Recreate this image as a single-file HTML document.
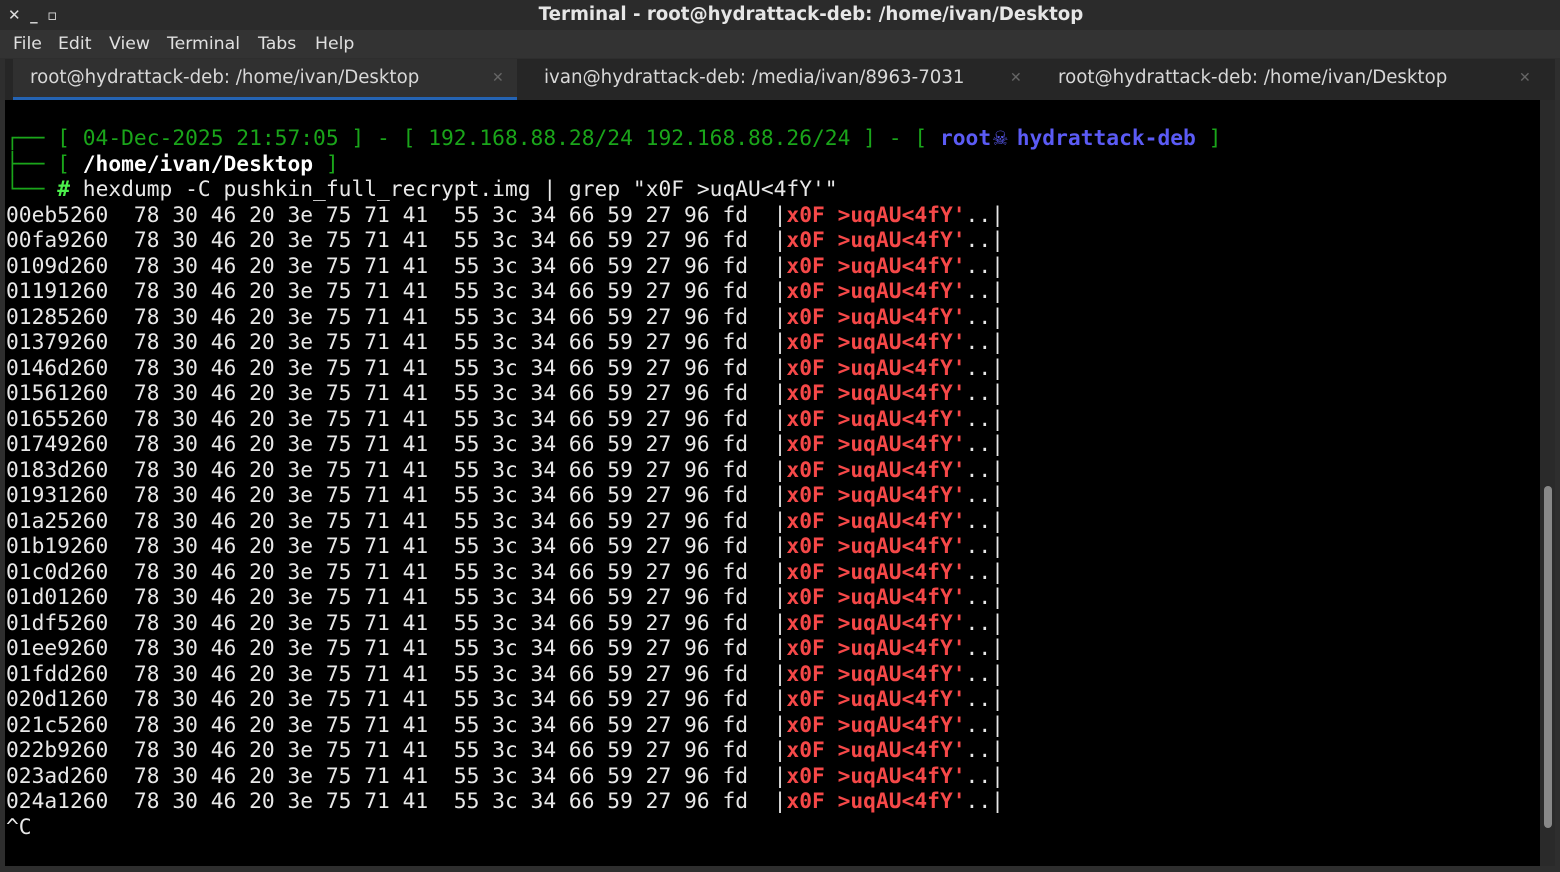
<!DOCTYPE html>
<html><head><meta charset="utf-8"><style>
*{margin:0;padding:0;box-sizing:border-box}
body{width:1560px;height:872px;background:#2e2e2e;overflow:hidden;position:relative;font-family:"DejaVu Sans","Liberation Sans",sans-serif}
.title{position:absolute;left:0;top:0;width:1622px;height:30px;background:#2b2b2b;color:#e6e6e6;font-weight:bold;font-size:18.2px;text-align:center;line-height:30px}
.wc{position:absolute;top:0;left:8px;color:#ddd;font-size:15px;line-height:30px}
.menu{position:absolute;top:30px;left:0;width:1560px;height:28px;background:#333;color:#e0e0e0;font-size:17.3px;line-height:28px}
.menu span{position:absolute}
.tabs{position:absolute;top:59px;left:5px;width:1550px;height:41px;background:#262626}
.tab{position:absolute;top:0;height:41px;color:#d8d8d8;font-size:18.2px;line-height:38px}
.tab .x{position:absolute;color:#666;font-size:14px}
.term{position:absolute;left:5px;top:100px;width:1535px;height:766px;background:#000;overflow:hidden}
.sb{position:absolute;left:1540px;top:100px;width:15px;height:766px;background:#2a2a2a}
.thumb{position:absolute;left:4px;top:386px;width:8px;height:342px;background:#888;border-radius:4px}
pre{position:absolute;left:1px;top:26px;font-family:"DejaVu Sans Mono","Liberation Mono",monospace;font-size:21.25px;line-height:25.5px;color:#e8e8e8}
.g{color:#1aa51a}.G{color:#4cf04c;font-weight:bold}.b{color:#5b5bf5;font-weight:bold}.w{color:#fff;font-weight:bold}.r{color:#f54848;font-weight:bold}
.sk{display:inline-block;width:12.8px;font-size:24px;line-height:10px;transform:translateX(2px)}
</style></head><body>
<div class="title">Terminal - root@hydrattack-deb: /home/ivan/Desktop</div>
<div class="wc">✕&nbsp;&nbsp;<b>_</b>&nbsp;&nbsp;▫</div>
<div class="menu"><span style="left:13px">File</span><span style="left:58px">Edit</span><span style="left:109px">View</span><span style="left:167px">Terminal</span><span style="left:258px">Tabs</span><span style="left:315px">Help</span></div>
<div class="tabs">
<div class="tab" style="left:8px;width:504px;background:#303030;border-bottom:3px solid #2463b3"><span style="position:absolute;left:17px">root@hydrattack-deb: /home/ivan/Desktop</span><span class="x" style="left:479px">✕</span></div>
<div class="tab" style="left:512px;width:514px"><span style="position:absolute;left:27px">ivan@hydrattack-deb: /media/ivan/8963-7031</span><span class="x" style="left:493px">✕</span></div>
<div class="tab" style="left:1026px;width:514px"><span style="position:absolute;left:27px">root@hydrattack-deb: /home/ivan/Desktop</span><span class="x" style="left:488px">✕</span></div>
</div>
<div class="term"><pre><span class="g">┌── [ 04-Dec-2025 21:57:05 ] - [ 192.168.88.28/24 192.168.88.26/24 ] - [ </span><span class="b">root<span class="sk">☠</span> hydrattack-deb</span><span class="g"> ]</span>
<span class="g">├── [ </span><span class="w">/home/ivan/Desktop</span><span class="g"> ]</span>
<span class="g">└── </span><span class="G">#</span> hexdump -C pushkin_full_recrypt.img | grep "x0F &gt;uqAU&lt;4fY'"
00eb5260  78 30 46 20 3e 75 71 41  55 3c 34 66 59 27 96 fd  |<span class="r">x0F &gt;uqAU&lt;4fY'</span>..|
00fa9260  78 30 46 20 3e 75 71 41  55 3c 34 66 59 27 96 fd  |<span class="r">x0F &gt;uqAU&lt;4fY'</span>..|
0109d260  78 30 46 20 3e 75 71 41  55 3c 34 66 59 27 96 fd  |<span class="r">x0F &gt;uqAU&lt;4fY'</span>..|
01191260  78 30 46 20 3e 75 71 41  55 3c 34 66 59 27 96 fd  |<span class="r">x0F &gt;uqAU&lt;4fY'</span>..|
01285260  78 30 46 20 3e 75 71 41  55 3c 34 66 59 27 96 fd  |<span class="r">x0F &gt;uqAU&lt;4fY'</span>..|
01379260  78 30 46 20 3e 75 71 41  55 3c 34 66 59 27 96 fd  |<span class="r">x0F &gt;uqAU&lt;4fY'</span>..|
0146d260  78 30 46 20 3e 75 71 41  55 3c 34 66 59 27 96 fd  |<span class="r">x0F &gt;uqAU&lt;4fY'</span>..|
01561260  78 30 46 20 3e 75 71 41  55 3c 34 66 59 27 96 fd  |<span class="r">x0F &gt;uqAU&lt;4fY'</span>..|
01655260  78 30 46 20 3e 75 71 41  55 3c 34 66 59 27 96 fd  |<span class="r">x0F &gt;uqAU&lt;4fY'</span>..|
01749260  78 30 46 20 3e 75 71 41  55 3c 34 66 59 27 96 fd  |<span class="r">x0F &gt;uqAU&lt;4fY'</span>..|
0183d260  78 30 46 20 3e 75 71 41  55 3c 34 66 59 27 96 fd  |<span class="r">x0F &gt;uqAU&lt;4fY'</span>..|
01931260  78 30 46 20 3e 75 71 41  55 3c 34 66 59 27 96 fd  |<span class="r">x0F &gt;uqAU&lt;4fY'</span>..|
01a25260  78 30 46 20 3e 75 71 41  55 3c 34 66 59 27 96 fd  |<span class="r">x0F &gt;uqAU&lt;4fY'</span>..|
01b19260  78 30 46 20 3e 75 71 41  55 3c 34 66 59 27 96 fd  |<span class="r">x0F &gt;uqAU&lt;4fY'</span>..|
01c0d260  78 30 46 20 3e 75 71 41  55 3c 34 66 59 27 96 fd  |<span class="r">x0F &gt;uqAU&lt;4fY'</span>..|
01d01260  78 30 46 20 3e 75 71 41  55 3c 34 66 59 27 96 fd  |<span class="r">x0F &gt;uqAU&lt;4fY'</span>..|
01df5260  78 30 46 20 3e 75 71 41  55 3c 34 66 59 27 96 fd  |<span class="r">x0F &gt;uqAU&lt;4fY'</span>..|
01ee9260  78 30 46 20 3e 75 71 41  55 3c 34 66 59 27 96 fd  |<span class="r">x0F &gt;uqAU&lt;4fY'</span>..|
01fdd260  78 30 46 20 3e 75 71 41  55 3c 34 66 59 27 96 fd  |<span class="r">x0F &gt;uqAU&lt;4fY'</span>..|
020d1260  78 30 46 20 3e 75 71 41  55 3c 34 66 59 27 96 fd  |<span class="r">x0F &gt;uqAU&lt;4fY'</span>..|
021c5260  78 30 46 20 3e 75 71 41  55 3c 34 66 59 27 96 fd  |<span class="r">x0F &gt;uqAU&lt;4fY'</span>..|
022b9260  78 30 46 20 3e 75 71 41  55 3c 34 66 59 27 96 fd  |<span class="r">x0F &gt;uqAU&lt;4fY'</span>..|
023ad260  78 30 46 20 3e 75 71 41  55 3c 34 66 59 27 96 fd  |<span class="r">x0F &gt;uqAU&lt;4fY'</span>..|
024a1260  78 30 46 20 3e 75 71 41  55 3c 34 66 59 27 96 fd  |<span class="r">x0F &gt;uqAU&lt;4fY'</span>..|
^C</pre></div>
<div class="sb"><div class="thumb"></div></div>
</body></html>
